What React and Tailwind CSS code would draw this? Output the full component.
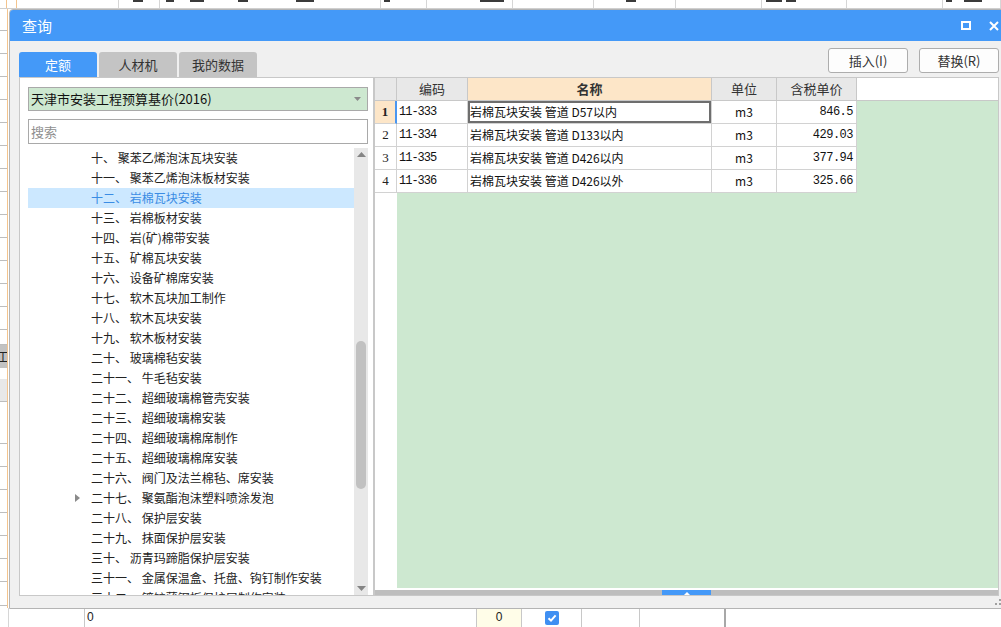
import { useState } from "react";

const treeItems = [
  ["十、", "聚苯乙烯泡沫瓦块安装"],
  ["十一、", "聚苯乙烯泡沫板材安装"],
  ["十二、", "岩棉瓦块安装"],
  ["十三、", "岩棉板材安装"],
  ["十四、", "岩(矿)棉带安装"],
  ["十五、", "矿棉瓦块安装"],
  ["十六、", "设备矿棉席安装"],
  ["十七、", "软木瓦块加工制作"],
  ["十八、", "软木瓦块安装"],
  ["十九、", "软木板材安装"],
  ["二十、", "玻璃棉毡安装"],
  ["二十一、", "牛毛毡安装"],
  ["二十二、", "超细玻璃棉管壳安装"],
  ["二十三、", "超细玻璃棉安装"],
  ["二十四、", "超细玻璃棉席制作"],
  ["二十五、", "超细玻璃棉席安装"],
  ["二十六、", "阀门及法兰棉毡、席安装"],
  ["二十七、", "聚氨酯泡沫塑料喷涂发泡", true],
  ["二十八、", "保护层安装"],
  ["二十九、", "抹面保护层安装"],
  ["三十、", "沥青玛蹄脂保护层安装"],
  ["三十一、", "金属保温盒、托盘、钩钉制作安装"],
  ["三十二、", "镀锌薄钢板保护层制作安装"],
];

const rows = [
  { code: "11-333", name: "岩棉瓦块安装 管道 D57以内", unit: "m3", price: "846.5" },
  { code: "11-334", name: "岩棉瓦块安装 管道 D133以内", unit: "m3", price: "429.03" },
  { code: "11-335", name: "岩棉瓦块安装 管道 D426以内", unit: "m3", price: "377.94" },
  { code: "11-336", name: "岩棉瓦块安装 管道 D426以外", unit: "m3", price: "325.66" },
];

// background sheet, left strip cells (height, style)
const leftStrip = [
  [22, ""], [23, ""], [23, ""], [23, ""], [23, ""], [23, ""], [23, ""], [23, ""],
  [23, ""], [23, ""], [23, ""], [23, ""], [23, ""], [23, ""], [15, ""],
  [23, "dark"], [11, "plain"], [23, "light"], [42, ""], [23, ""], [23, ""],
  [23, ""], [23, ""], [23, ""], [23, ""], [24, ""],
];

// top strip: width, cut-off ink fragments [offset, width], border colour
const topCells = [
  [7, [], "border-[#f3c48e]"], [10, [], "border-[#f3c48e]"], [102, [], ""],
  [41, [[14, 10]], ""], [221, [[6, 8], [16, 14], [34, 10], [48, 18], [70, 6], [90, 24], [122, 10], [136, 10]], ""],
  [46, [], ""], [86, [], ""], [81, [], ""], [82, [], ""], [86, [], ""],
  [85, [[4, 6], [14, 10]], ""], [96, [], ""], [58, [[3, 6], [12, 18], [33, 8]], ""],
];

const App = () => {
  const [selected, setSelected] = useState(2);
  const [tab, setTab] = useState(0);

  return (
    <div className="relative w-[1001px] h-[627px] overflow-hidden bg-white font-['Noto_Sans_CJK_SC',sans-serif] text-[#222]">
      {/* Background sheet */}
      <div className="flex flex-col h-full">
        <div className="h-[9px] flex border-b border-[#cfcfcf] overflow-hidden">
          {topCells.map(([w, ink, bc], i) => (
            <div
              key={i}
              style={{ width: w }}
              className={`shrink-0 border-r ${bc || "border-[#d6d6d6]"} flex items-start`}
            >
              {ink.map(([o, iw], j) => (
                <div key={j} style={{ marginLeft: o, width: iw }} className="h-[2px] bg-[#3a3a3a] shrink-0 -mr-[0px]" />
              ))}
            </div>
          ))}
        </div>
        <div className="flex-1 flex">
          <div className="w-[8px] flex flex-col border-r border-[#f3c48e]">
            {leftStrip.map(([h, s], i) => (
              <div
                key={i}
                style={{ height: h }}
                className={`shrink-0 overflow-hidden ${
                  s === "dark"
                    ? "bg-[#c2c2c2] text-[12px] leading-[23px]"
                    : s === "light"
                    ? "bg-[#e8e8e8] border-b border-[#bdbdbd]"
                    : s === "plain"
                    ? ""
                    : "border-b border-[#bdbdbd]"
                }`}
              >
                {s === "dark" && <span className="block -ml-[3px]">工</span>}
              </div>
            ))}
          </div>
        </div>
        <div className="h-[19px] flex text-[12px] leading-[19px] font-['Liberation_Sans',sans-serif]">
          <div className="w-[9px] border-r border-[#d6d6d6]" />
          <div className="w-[76px] border-r border-[#c8c8c8]" />
          <div className="w-[392px] border-r border-[#c8c8c8] pl-[2px]">0</div>
          <div className="w-[45px] border-r border-[#c8c8c8] bg-[#fffde8] text-center">0</div>
          <div className="w-[60px] border-r border-[#c8c8c8] flex items-center justify-center">
            <div className="w-[14px] h-[14px] rounded-[2px] bg-[#3f8ff2] flex items-center justify-center">
              <svg width="10" height="10" viewBox="0 0 10 10">
                <path d="M1.5 5.2 L4 7.6 L8.6 2.4" stroke="white" strokeWidth="2" fill="none" />
              </svg>
            </div>
          </div>
          <div className="w-[58px] border-r border-[#c8c8c8]" />
          <div className="w-[86px] border-r-2 border-[#a8a8a8]" />
          <div className="flex-1" />
        </div>
      </div>

      {/* Dialog */}
      <div className="absolute left-[9px] top-[9px] w-[996px] h-[600px] border border-[#b4b4b4] rounded-tl-[4px] bg-[#f0f0f0] flex flex-col overflow-hidden">
        {/* Title bar */}
        <div className="h-[31px] shrink-0 bg-[#4499f8] flex items-center justify-between pl-[12px] pr-[5px] text-white">
          <span className="text-[15px] leading-none">查询</span>
          <div className="flex items-center gap-[18px]">
            <div className="w-[10px] h-[9px] border-2 border-white" />
            <svg width="10" height="10" viewBox="0 0 10 10">
              <path d="M1 1 L9 9 M9 1 L1 9" stroke="white" strokeWidth="2" />
            </svg>
          </div>
        </div>

        {/* Tabs + buttons */}
        <div className="h-[36px] shrink-0 flex items-end justify-between pl-[9px] pr-[5px] pt-[7px]">
          <div className="flex gap-[2px]">
            {["定额", "人材机", "我的数据"].map((t, i) => (
              <button
                key={t}
                onClick={() => setTab(i)}
                className={`w-[78px] h-[25px] rounded-t-[3px] text-[13px] leading-[25px] text-center ${
                  tab === i ? "bg-[#4499f8] text-white" : "bg-[#c4c4c4] text-[#333]"
                }`}
              >
                {t}
              </button>
            ))}
          </div>
          <div className="flex gap-[11px] mb-[4px]">
            <button className="w-[80px] h-[25px] rounded-[3px] border border-[#adadad] bg-[#fdfdfd] text-[13px] text-[#333]">
              插入(I)
            </button>
            <button className="w-[80px] h-[25px] rounded-[3px] border border-[#adadad] bg-[#fdfdfd] text-[13px] text-[#333]">
              替换(R)
            </button>
          </div>
        </div>

        {/* Content */}
        <div className="h-[519px] shrink-0 flex pl-[9px] pr-[5px]">
          {/* Left panel */}
          <div className="w-[355px] shrink-0 bg-white border border-[#c8c8c8] flex flex-col pl-[8px] pr-[5px]">
            <div className="mt-[9px] h-[24px] border border-[#a9a9a9] bg-[#cde8d0] flex items-center justify-between pl-[2px] pr-[6px]">
              <span className="text-[13px] text-[#111]">天津市安装工程预算基价(2016)</span>
              <svg width="7" height="4" viewBox="0 0 7 4">
                <path d="M0 0 L7 0 L3.5 4 Z" fill="#8a8a8a" />
              </svg>
            </div>
            <div className="mt-[8px] h-[25px] border border-[#a9a9a9] bg-white flex items-center pl-[2px]">
              <span className="text-[13px] text-[#8f8f8f]">搜索</span>
            </div>
            <div className="mt-[4px] flex-1 min-h-0 flex overflow-hidden">
              <div className="flex-1 overflow-hidden">
                {treeItems.map(([num, name, expand], i) => (
                  <div
                    key={i}
                    onClick={() => setSelected(i)}
                    className={`h-[20px] flex items-center text-[12px] whitespace-pre ${
                      selected === i ? "bg-[#cce8ff] text-[#3a8ce4]" : ""
                    }`}
                  >
                    <div className="w-[63px] shrink-0 flex justify-end pr-[11px]">
                      {expand && (
                        <svg width="5" height="8" viewBox="0 0 5 8">
                          <path d="M0 0 L5 4 L0 8 Z" fill="#8a8a8a" />
                        </svg>
                      )}
                    </div>
                    <span>{num + " " + name}</span>
                  </div>
                ))}
              </div>
              <div className="w-[14px] shrink-0 bg-[#e8e8e8] flex flex-col items-center">
                <svg className="mt-[4px]" width="9" height="5" viewBox="0 0 9 5">
                  <path d="M0 5 L4.5 0 L9 5 Z" fill="#858585" />
                </svg>
                <div className="mt-[184px] w-[10px] h-[148px] rounded-[5px] bg-[#c1c1c1]" />
                <div className="flex-1" />
                <svg className="mb-[4px]" width="9" height="5" viewBox="0 0 9 5">
                  <path d="M0 0 L9 0 L4.5 5 Z" fill="#858585" />
                </svg>
              </div>
            </div>
          </div>

          {/* Right panel */}
          <div className="flex-1 bg-white border border-[#c8c8c8] flex flex-col text-[13px]">
            <div className="h-[23px] shrink-0 flex border-b border-[#c8c8c8] text-[#333]">
              <div className="w-[22px] bg-[#e8e8e8] border-r border-[#c8c8c8]" />
              <div className="w-[71px] bg-[#e8e8e8] border-r border-[#c8c8c8] text-center leading-[22px]">编码</div>
              <div className="w-[244px] bg-[#fde6c8] border-r border-[#c8c8c8] text-center leading-[22px] font-bold">名称</div>
              <div className="w-[65px] bg-[#e8e8e8] border-r border-[#c8c8c8] text-center leading-[22px]">单位</div>
              <div className="w-[80px] bg-[#e8e8e8] border-r border-[#c8c8c8] text-center leading-[22px]">含税单价</div>
              <div className="flex-1" />
            </div>
            <div className="flex-1 flex min-h-0">
              <div className="w-[22px] shrink-0 flex flex-col font-['Liberation_Serif',serif] text-[13px]">
                {rows.map((r, i) => (
                  <div
                    key={i}
                    className={`h-[23px] border-b border-[#d2d2d2] text-center leading-[22px] ${
                      i === 0
                        ? "bg-[#fde6c8] border-r-2 border-r-[#4a96f0] font-bold"
                        : "border-r border-r-[#d2d2d2]"
                    }`}
                  >
                    {i + 1}
                  </div>
                ))}
              </div>
              <div className="flex-1 bg-[#cde8d0]">
                {rows.map((r, i) => (
                  <div key={i} className="h-[23px] flex text-[12px] leading-[22px] text-[#111]">
                    <div className="w-[71px] bg-white border-r border-b border-[#d2d2d2] pl-[2px] font-['Liberation_Mono','Noto_Sans_CJK_SC',monospace] tracking-[-1px]">
                      {r.code}
                    </div>
                    <div
                      className={`w-[244px] bg-white border-r border-b border-[#d2d2d2] pl-[2px] whitespace-pre ${
                        i === 0 ? "shadow-[inset_0_0_0_2px_#6e6e6e]" : ""
                      }`}
                    >
                      {r.name}
                    </div>
                    <div className="w-[65px] bg-white border-r border-b border-[#d2d2d2] text-center">{r.unit}</div>
                    <div className="w-[80px] bg-white border-r border-b border-[#d2d2d2] text-right pr-[3px] font-['Liberation_Mono',monospace] tracking-[-0.5px]">
                      {r.price}
                    </div>
                  </div>
                ))}
              </div>
            </div>
            <div className="h-[2px] shrink-0 bg-white" />
            <div className="h-[5px] shrink-0 bg-[#bebebe] flex">
              <div className="w-[287px]" />
              <div className="w-[49px] bg-[#4499f8] flex justify-center items-end">
                <svg width="6" height="3" viewBox="0 0 6 3">
                  <path d="M0 3 L3 0 L6 3 Z" fill="white" />
                </svg>
              </div>
            </div>
          </div>
        </div>

        {/* Bottom strip with grip */}
        <div className="flex-1 flex justify-end items-end pr-[3px] pb-[3px]">
          <svg width="6" height="6" viewBox="0 0 6 6">
            <rect x="4" y="0" width="2" height="2" fill="#a0a0a0" />
            <rect x="0" y="4" width="2" height="2" fill="#a0a0a0" />
            <rect x="4" y="4" width="2" height="2" fill="#a0a0a0" />
          </svg>
        </div>
      </div>
    </div>
  );
};

export default App;
